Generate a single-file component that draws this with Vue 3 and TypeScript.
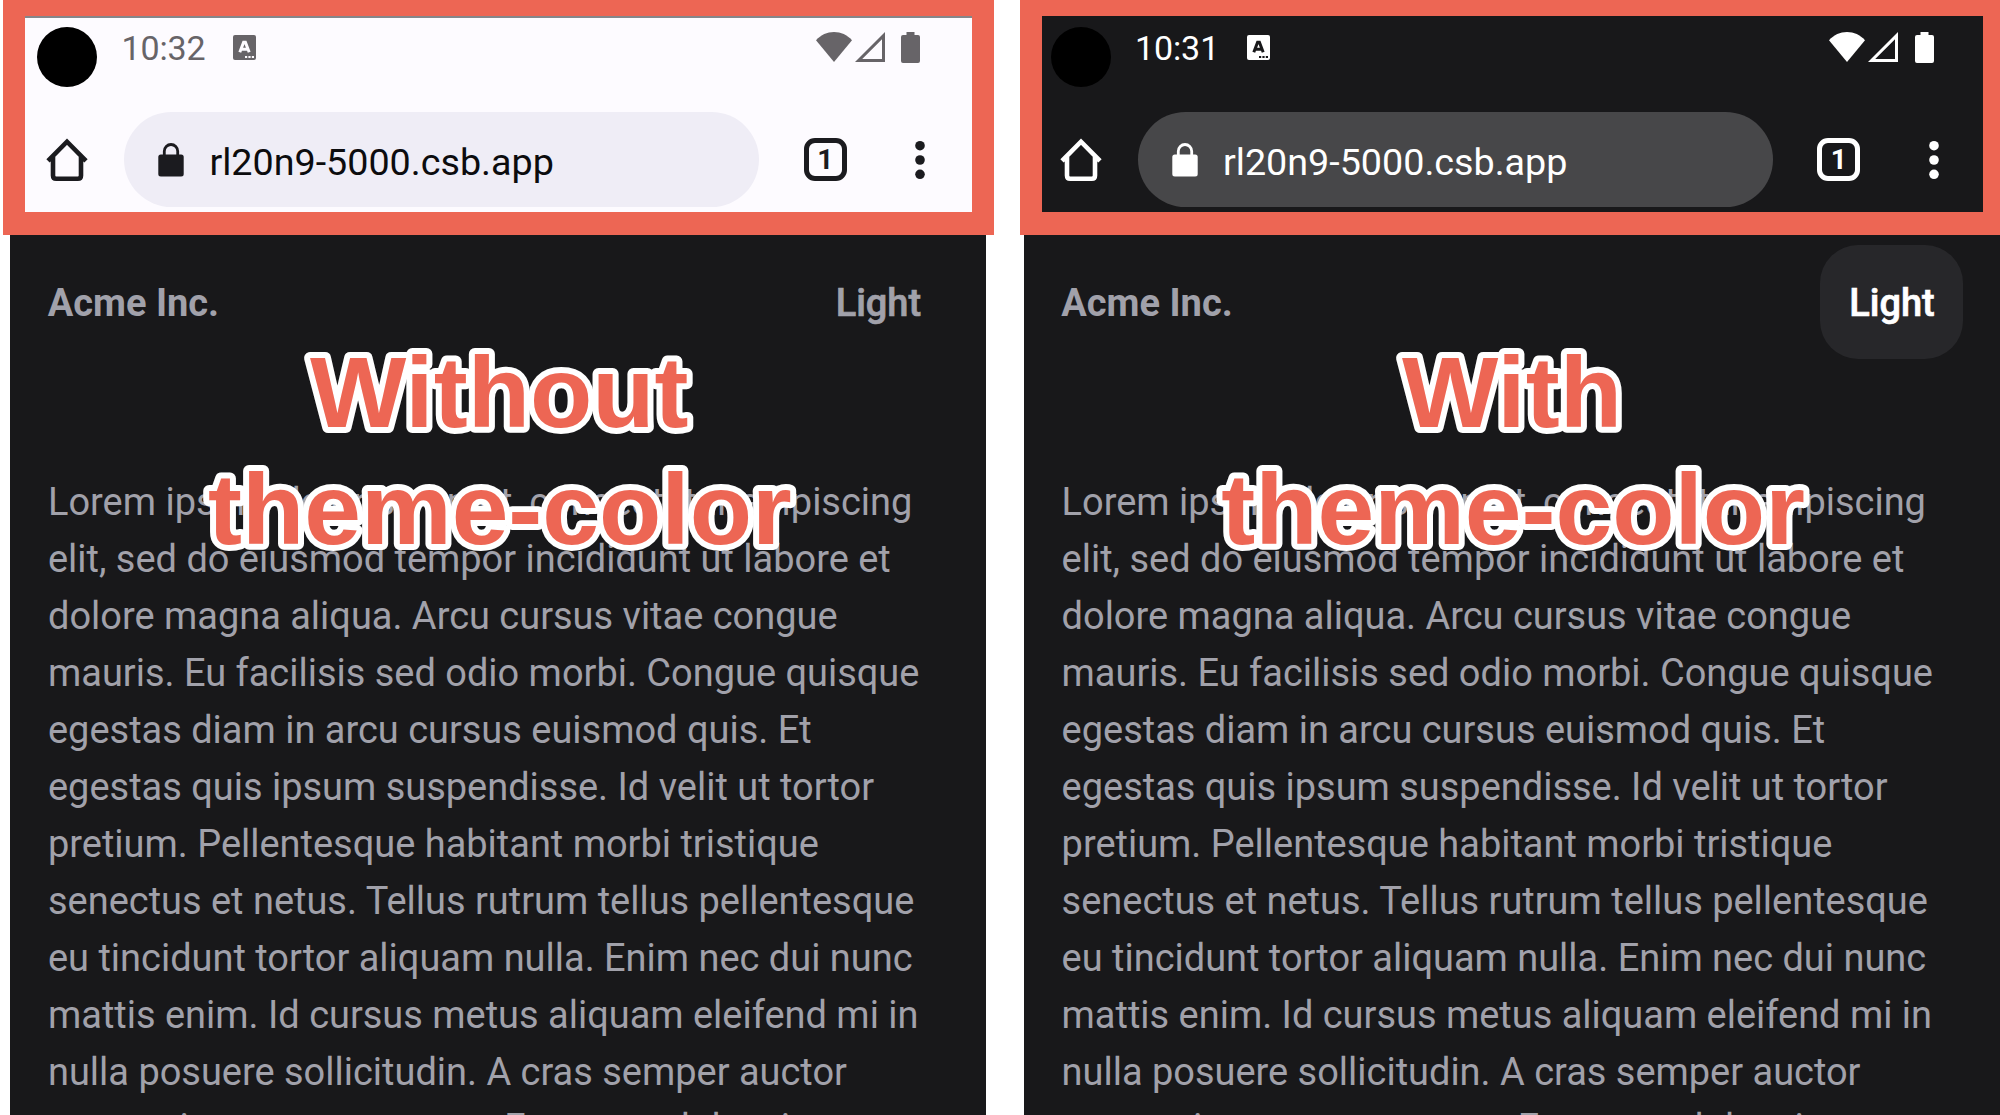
<script setup lang="ts">
interface Phone {
  id: string
  theme: 'light' | 'dark'
  time: string
  pressed: boolean
}

interface Caption {
  text: string
  x: number
  y: number
}

const phones: Phone[] = [
  { id: 'without', theme: 'light', time: '10:32', pressed: false },
  { id: 'with', theme: 'dark', time: '10:31', pressed: true },
]

const captions: Caption[] = [
  { text: 'Without', x: 310, y: 426.6 },
  { text: 'theme-color', x: 208, y: 544.5 },
  { text: 'With', x: 1402, y: 426.6 },
  { text: 'theme-color', x: 1221.2, y: 544.5 },
]

const lines: string[] = [
  'Lorem ipsum dolor sit amet, consectetur adipiscing',
  'elit, sed do eiusmod tempor incididunt ut labore et',
  'dolore magna aliqua. Arcu cursus vitae congue',
  'mauris. Eu facilisis sed odio morbi. Congue quisque',
  'egestas diam in arcu cursus euismod quis. Et',
  'egestas quis ipsum suspendisse. Id velit ut tortor',
  'pretium. Pellentesque habitant morbi tristique',
  'senectus et netus. Tellus rutrum tellus pellentesque',
  'eu tincidunt tortor aliquam nulla. Enim nec dui nunc',
  'mattis enim. Id cursus metus aliquam eleifend mi in',
  'nulla posuere sollicitudin. A cras semper auctor',
  'neque vitae tempus quam. Eget nunc lobortis',
]
</script>

<template>
  <main class="stage">
    <section v-for="p in phones" :key="p.id" class="phone" :class="p.theme">
      <div class="chrome">
        <div class="status">
          <span class="cutout"></span>
          <span class="time">{{ p.time }}</span>
          <svg class="badge" width="23" height="25" viewBox="0 0 23 25">
            <rect width="23" height="25" rx="2" fill="currentColor" />
            <path class="cut" d="M6.8 17.3 10.6 7.3H12.4L16.2 17.3M8.4 14.2H14.6" />
            <path class="dots" d="M12 21h2.2v2H12zM15.4 21h2.2v2h-2.2zM18.8 21H21v2h-2.2z" />
          </svg>
          <svg class="wifi" width="36" height="30" viewBox="0 0 36 30">
            <path d="M0 8.2C5 2.8 11 0 18 0S31 2.8 36 8.2L18 30Z" fill="currentColor" />
          </svg>
          <svg class="signal" width="30" height="30" viewBox="0 0 30 30">
            <path d="M30 0V30H0ZM27 7.2 7.2 27H27Z" fill="currentColor" fill-rule="evenodd" />
          </svg>
          <svg class="battery" width="19" height="31" viewBox="0 0 19 31">
            <path d="M5.5 0h8v3H17a2 2 0 0 1 2 2V29a2 2 0 0 1-2 2H2a2 2 0 0 1-2-2V5A2 2 0 0 1 2 3H5.5Z" fill="currentColor" />
          </svg>
        </div>
        <div class="toolbar">
          <svg class="home" width="44" height="44" viewBox="0 0 44 44">
            <path d="M3 22.800 22 3.700 41 22.800M8 19V37.500Q8 40.800 11.200 40.800H32.800Q36 40.800 36 37.500V19" />
          </svg>
          <div class="omnibox">
            <svg class="lock" width="26" height="34" viewBox="0 0 26 34">
              <rect x="0.3" y="11.5" width="25.4" height="22" rx="2.5" fill="currentColor" />
              <path d="M6.3 13V8.200a6.700 6.700 0 0 1 13.400 0V13" fill="none" stroke="currentColor" stroke-width="2.8" />
            </svg>
            <span class="url">rl20n9-5000.csb.app</span>
          </div>
          <span class="tabs">1</span>
          <svg class="menu" width="10" height="40" viewBox="0 0 10 40">
            <circle cx="5" cy="5.7" r="4.8" />
            <circle cx="5" cy="20" r="4.8" />
            <circle cx="5" cy="34.3" r="4.8" />
          </svg>
        </div>
      </div>
      <header class="site">
        <span class="brand">Acme Inc.</span>
        <span class="toggle" :class="{ pressed: p.pressed }">Light</span>
      </header>
      <div class="copy">
        <div v-for="line in lines" :key="line"><span class="line">{{ line }}</span></div>
      </div>
      <div class="frame"></div>
    </section>
    <svg class="captions" width="2000" height="1115" viewBox="0 0 2000 1115">
      <g transform="scale(1 0.985)">
        <text v-for="c in captions" :key="c.x" :x="c.x" :y="c.y / 0.985">{{ c.text }}</text>
      </g>
    </svg>
  </main>
</template>

<style>
body {
  margin: 0;
  background: #fff;
}
</style>

<style scoped>
.stage {
  position: relative;
  width: 2000px;
  height: 1115px;
  overflow: hidden;
  display: flex;
  gap: 37.6px;
  padding-left: 10.4px;
  box-sizing: border-box;
  background: #fff;
  font-family: Roboto, sans-serif;
}
.phone {
  position: relative;
  flex: 0 0 976px;
  height: 1115px;
  background: #18181a;
  color: #a1a1aa;
}
.chrome {
  height: 235px;
}
.light .chrome {
  background: #fdfbff;
  color: #1b1b1f;
}
.dark .chrome {
  color: #fff;
}
.status {
  display: flex;
  align-items: flex-start;
  height: 112px;
}
.light .status {
  color: #676468;
}
.cutout {
  width: 60px;
  height: 60px;
  margin: 27.4px 0 0 26.7px;
  border-radius: 50%;
  background: #000;
}
.time {
  width: 112px;
  margin: 28px 0 0 24.3px;
  font-size: 34px;
  line-height: 40px;
  letter-spacing: -0.1px;
  white-space: nowrap;
}
.badge {
  margin-top: 35px;
}
.cut {
  fill: none;
  stroke: #fdfbff;
  stroke-width: 3;
}
.dots {
  fill: #fdfbff;
}
.dark .cut {
  stroke: #18181a;
}
.dark .dots {
  fill: #18181a;
}
.wifi {
  margin: 32px 0 0 559.2px;
}
.signal {
  margin: 32px 0 0 3.2px;
}
.battery {
  margin: 32px 0 0 16.6px;
}
.toolbar {
  display: flex;
  align-items: center;
  height: 95px;
}
.home {
  margin: 1px 0 0 34.8px;
  fill: none;
  stroke: currentColor;
  stroke-width: 4.6;
}
.omnibox {
  display: flex;
  align-items: center;
  width: 635px;
  height: 95px;
  margin-left: 35px;
  padding-left: 34.2px;
  box-sizing: border-box;
  border-radius: 48px;
  background: #efedf6;
}
.dark .omnibox {
  background: #474749;
}
.url {
  margin: 5px 0 0 25px;
  font-size: 37.7px;
  line-height: 46px;
  color: #0c0c0e;
  white-space: nowrap;
}
.dark .url {
  color: #fff;
}
.tabs {
  width: 43px;
  height: 43px;
  margin-left: 44.6px;
  box-sizing: border-box;
  border: 5px solid currentColor;
  border-radius: 11px;
  font-size: 28px;
  font-weight: 700;
  line-height: 34px;
  text-align: center;
}
.menu {
  margin-left: 68.2px;
  fill: currentColor;
}
.site {
  display: flex;
  justify-content: space-between;
  align-items: center;
  height: 114px;
  margin: 10px 36.5px 0 37.3px;
  font-size: 38px;
  font-weight: 700;
}
.brand {
  margin-top: 1px;
}
.toggle {
  display: flex;
  align-items: center;
  justify-content: center;
  width: 143px;
  height: 114px;
  padding-top: 1px;
  box-sizing: border-box;
  border-radius: 38px;
  font-weight: 500;
  -webkit-text-stroke: 0.7px currentColor;
}
.toggle.pressed {
  background: #27272a;
  color: #fff;
}
.copy {
  margin: 115px 0 0 37.6px;
  height: 641px;
  overflow: hidden;
  font-size: 37.96px;
  line-height: 56.95px;
  white-space: nowrap;
}
.frame {
  position: absolute;
  left: -7.5px;
  top: -6px;
  width: 991px;
  height: 241px;
  box-sizing: border-box;
  border: 22px solid #ed6654;
  border-bottom-width: 23px;
}
.light .frame {
  box-shadow: inset 0 2px 0 #85868a;
}
.dark .frame {
  left: -4.2px;
  width: 985px;
}
.captions {
  position: absolute;
  left: 0;
  top: 0;
  font: 700 102px "Liberation Sans", Arial, sans-serif;
  fill: #ed6654;
  stroke: #fff;
  stroke-width: 12px;
  stroke-linejoin: round;
  paint-order: stroke;
}
</style>
